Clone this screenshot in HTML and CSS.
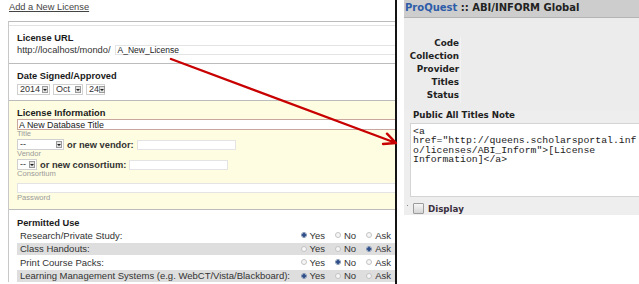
FILE: index.html
```html
<!DOCTYPE html>
<html>
<head>
<meta charset="utf-8">
<link rel="stylesheet" href="styles.css">
</head>
<body>
<div class="page">
  <div class="left">
    <div class="title"><a href="#">Add a New License</a></div>
    <div class="form">
      <div class="sec sec-first">
        <div class="h">License URL</div>
        <div class="urlrow"><span class="urlpre">http://localhost/mondo/</span><span class="inp inp-url">A_New_License</span></div>
      </div>
      <div class="sec sec-date">
        <div class="h">Date Signed/Approved</div>
        <div class="selrow">
          <span class="sel w33"><span>2014</span><i class="btn"></i></span>
          <span class="sel w30"><span>Oct</span><i class="btn"></i></span>
          <span class="sel w19"><span>24</span><i class="btn"></i></span>
        </div>
      </div>
      <div class="sec sec-info">
        <div class="h">License Information</div>
        <div class="inp inp-title">A New Database Title</div>
        <div class="lbl">Title</div>
        <div class="frow"><span class="sel w47"><span>--</span><i class="btn"></i></span><b class="or">or new vendor:</b><span class="inp inp-sm"></span></div>
        <div class="lbl">Vendor</div>
        <div class="frow"><span class="sel w20"><span>--</span><i class="btn"></i></span><b class="or">or new consortium:</b><span class="inp inp-sm"></span></div>
        <div class="lbl">Consortium</div>
        <div class="inp inp-pw"></div>
        <div class="lbl lbl-pw">Password</div>
      </div>
      <div class="sec sec-use">
        <div class="h">Permitted Use</div>
        <div class="uses">
          <div class="use"><span>Research/Private Study:</span><span class="radios"><span class="rd on"></span>Yes<span class="rd"></span>No<span class="rd"></span>Ask</span></div>
          <div class="use alt"><span>Class Handouts:</span><span class="radios"><span class="rd"></span>Yes<span class="rd"></span>No<span class="rd on"></span>Ask</span></div>
          <div class="use"><span>Print Course Packs:</span><span class="radios"><span class="rd"></span>Yes<span class="rd on"></span>No<span class="rd"></span>Ask</span></div>
          <div class="use alt"><span>Learning Management Systems (e.g. WebCT/Vista/Blackboard):</span><span class="radios"><span class="rd on"></span>Yes<span class="rd"></span>No<span class="rd"></span>Ask</span></div>
        </div>
      </div>
    </div>
  </div>
  <div class="right">
    <div class="rhead"><span class="pq">ProQuest</span> :: ABI/INFORM Global</div>
    <div class="rbody">
      <div class="fields">
        <div class="f">Code</div><div class="v"></div>
        <div class="f">Collection</div><div class="v"></div>
        <div class="f">Provider</div><div class="v"></div>
        <div class="f">Titles</div><div class="v"></div>
        <div class="f">Status</div><div class="v"></div>
      </div>
      <div class="note">
        <div class="note-h">Public All Titles Note</div>
        <div class="ta"><div>&lt;a</div><div>href="http://queens.scholarsportal.inf</div><div>o/licenses/ABI_Inform"&gt;[License</div><div>Information]&lt;/a&gt;</div></div>
        <div class="disp"><span class="dot"></span><span class="cb"></span>Display</div>
      </div>
    </div>
  </div>
</div>
<svg class="arrow" width="639" height="284" viewBox="0 0 639 284"><path d="M171 59 L396 143 M383 144 L396 143 L387 133.7" fill="none" stroke="#c80000" stroke-width="2.4" stroke-linecap="round" stroke-linejoin="round"/></svg>
</body>
</html>
```
FILE: styles.css
```css
* { box-sizing: border-box; }
html, body { margin: 0; padding: 0; }
body {
  width: 639px; height: 284px; overflow: hidden; background: #fff;
  font-family: "Liberation Sans", Arial, sans-serif; color: #222; position: relative;
}
.page { display: flex; height: 284px; }

.left { width: 397px; flex: none; border-right: 2px solid #141414; overflow: hidden; font-size: 9.3px; }
.title { height: 21px; padding: 1px 0 0 9px; line-height: 12px; }
.title a { color: #444; text-decoration: underline; }
.form { margin-left: 8px; border-top: 1px solid #bcbcbc; border-left: 1px solid #c8c8c8; }
.sec { border-top: 1px solid #bcbcbc; padding: 6px 0 0 8px; }
.sec-first { margin-top: 3px; border-top-color: #e2e2e2; padding-bottom: 8px; }
.sec-date { padding-bottom: 5px; }
.sec-info { background: #fefde1; padding-bottom: 8px; }
.sec-use { padding-top: 7px; }
.h { font-weight: bold; line-height: 12px; color: #1a1a1a; }

.urlrow { display: flex; align-items: center; margin-top: 1px; height: 10px; }
.urlpre { color: #333; margin-right: 4px; }
.inp { background: #fff; border: 1px solid #e4e4e4; font-size: 8.5px; line-height: 8px; padding-left: 2px; color: #222; display: flex; align-items: center; }
.inp-url { flex: 1; height: 10px; margin-right: -10px; }
.inp-title { height: 11px; margin-right: -10px; border-color: #c9a79e; font-size: 8.9px; padding-left: 1px; }
.inp-pw { height: 10px; margin-top: 6px; margin-right: -10px; }
.inp-sm { width: 99px; height: 10px; }
.lbl { font-size: 7.6px; line-height: 7px; color: #9a9a9a; }
.lbl-pw { margin-top: 1px; }

.selrow, .frow { display: flex; align-items: center; margin-top: 2px; height: 11px; }
.selrow { gap: 3px; }
.sel {
  display: inline-flex; align-items: center; justify-content: space-between;
  height: 11px; border: 1px solid #d0d0d0; background: #fff; padding: 0 1px 0 2px;
  font-size: 9px; line-height: 9px; color: #333;
}
.w33 { width: 33px; } .w30 { width: 30px; } .w19 { width: 19px; } .w47 { width: 47px; } .w20 { width: 20px; }
.btn { flex: none; width: 6px; height: 7px; border: 1px solid #9a9a9a; background: #e2e2e2; display: flex; align-items: center; justify-content: center; }
.btn::after { content: ""; width: 0; height: 0; border-left: 2px solid transparent; border-right: 2px solid transparent; border-top: 2px solid #1a1a1a; }
.or { font-weight: bold; margin: 0 3px; color: #333; }

.uses { display: flex; flex-direction: column; gap: 1.5px; }
.use { display: flex; justify-content: space-between; align-items: center; height: 12px; padding: 0 4px 0 3px; color: #333; font-size: 9.5px; }
.use.alt { background: #dedede; }
.radios { display: flex; align-items: center; }
.rd { width: 6px; height: 6px; border-radius: 50%; border: 1px solid #c4c4c4; background: #f6f6f6; margin: 0 3px 0 10px; }
.rd:first-child { margin-left: 0; }
.rd.on { border-color: #7d8fae; background: radial-gradient(circle, #2f4f8a 0 1.6px, #dfe6f2 2px); }

.right { flex: 1; margin-left: 7px; overflow: hidden; font-family: "DejaVu Sans", Verdana, sans-serif; color: #222; }
.rhead { height: 18px; background: #cdcdcd; border-bottom: 1px solid #b4b4b4; font-size: 10px; font-weight: bold; line-height: 16px; padding-left: 1px; white-space: nowrap; }
.pq { color: #2d5ca8; }
.rbody { background: #ececec; }
.fields { display: grid; grid-template-columns: 57px 1fr; grid-auto-rows: 13.2px; padding-top: 18.7px; padding-bottom: 7.3px; }
.f { text-align: right; padding-right: 1px; font-size: 8.8px; font-weight: bold; line-height: 13.2px; border-right: 1px solid #f3f3f3; }

.note { background: #eeeeee; }
.note-h { font-size: 8.7px; font-weight: bold; line-height: 10px; height: 13px; padding-left: 9px; }
.ta {
  background: #fff; border: 1px solid #d4d4d4; margin-left: 6px; margin-right: -20px; height: 74px;
  padding: 3px 0 0 2px; font-family: "Liberation Mono", monospace; font-size: 9.8px; line-height: 9.5px;
  white-space: pre; color: #222; overflow: hidden;
}
.disp { height: 18px; display: flex; align-items: center; padding: 6px 0 0 3px; font-size: 8.7px; font-weight: bold; color: #3a3040; }
.dot { width: 1px; height: 1px; background: #888; align-self: flex-start; margin-top: 2px; }
.cb { width: 11px; height: 11px; border: 1px solid #9c9c9c; background: linear-gradient(#f6f6f6, #d6d6d6); margin: 0 4px 0 5px; border-radius: 1px; }

.arrow { position: absolute; left: 0; top: 0; pointer-events: none; }
```
